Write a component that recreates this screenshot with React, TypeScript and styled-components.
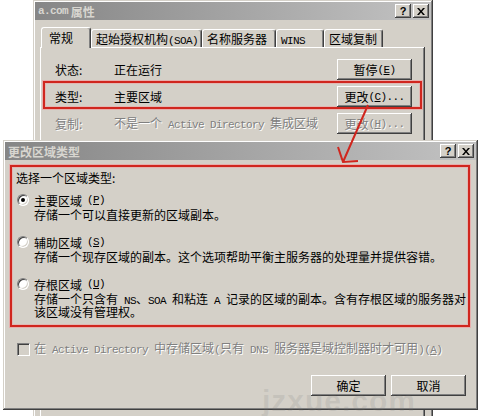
import styled, { createGlobalStyle } from 'styled-components';

const GlobalStyle = createGlobalStyle`
  html, body {
    margin: 0;
    padding: 0;
    background: #ffffff;
  }
  body {
    width: 481px;
    height: 416px;
    overflow: hidden;
    font-family: "Noto Sans CJK SC", "Noto Sans CJK TC", sans-serif;
    font-size: 12px;
    color: #000000;
  }
`;

// 윈도우 2000 스타일 색
const FACE = '#d4d0c8';
const RED = '#d0261e';

const raised = `
  background: ${FACE};
  box-shadow: inset -1px -1px #404040, inset 1px 1px #ffffff, inset -2px -2px #808080,
    inset 2px 2px ${FACE};
`;

const Desktop = styled.div`
  position: relative;
  width: 481px;
  height: 416px;
  overflow: hidden;
  background: #ffffff;
`;

const Window = styled.div`
  position: absolute;
  box-sizing: border-box;
  padding: 2px;
  display: flex;
  flex-direction: column;
  background: ${FACE};
  box-shadow: inset -1px -1px #404040, inset 1px 1px ${FACE}, inset -2px -2px #808080,
    inset 2px 2px #ffffff;
`;

const PropertiesWindow = styled(Window)`
  left: 33px;
  top: 0;
  width: 400px;
  height: 440px;
`;

const ZoneDialog = styled(Window)`
  left: 3px;
  top: 140px;
  width: 475px;
  height: 270px;
  z-index: 2;
`;

const TitleBar = styled.div`
  height: 18px;
  display: flex;
  align-items: center;
  padding: 0 2px 0 3px;
  background: linear-gradient(90deg, #868686, #c2c2c2);
  color: #d8d6d0;
  font-weight: bold;
  white-space: nowrap;
`;

const TitleButtons = styled.div`
  margin-left: auto;
  display: flex;
  gap: 2px;
`;

const TitleButton = styled.div`
  ${raised};
  width: 16px;
  height: 14px;
  display: flex;
  align-items: center;
  justify-content: center;
  font-family: "Liberation Sans", sans-serif;
  font-size: 11px;
  font-weight: bold;
  color: #000000;
`;

const Lt = styled.span`
  font-family: "Liberation Mono", monospace;
  font-size: 11px;
  letter-spacing: -0.6px;
`;

const TabStrip = styled.div`
  height: 20px;
  margin-top: 7px;
  padding-left: 6px;
  display: flex;
  align-items: flex-end;
`;

const Tab = styled.div<{ $width: number; $active?: boolean }>`
  position: relative;
  z-index: ${(p) => (p.$active ? 1 : 0)};
  box-sizing: border-box;
  width: ${(p) => p.$width}px;
  height: ${(p) => (p.$active ? 21 : 18)}px;
  margin-bottom: ${(p) => (p.$active ? -1 : 0)}px;
  padding-left: ${(p) => (p.$active ? 7 : 4)}px;
  line-height: ${(p) => (p.$active ? 19 : 17)}px;
  background: ${FACE};
  border-top: 1px solid #ffffff;
  border-left: 1px solid #ffffff;
  border-right: 1px solid #404040;
  box-shadow: inset -1px 0 #808080;
  border-radius: 3px 3px 0 0;
  white-space: nowrap;
`;

const TabPanel = styled.div`
  flex: 1;
  margin: 0 6px 0 5px;
  padding: 12px 13px 0 15px;
  ${raised};
  box-shadow: inset -1px -1px #404040, inset 1px 1px #ffffff, inset -2px -2px #808080;
`;

const InfoRow = styled.div<{ $disabled?: boolean }>`
  display: grid;
  grid-template-columns: 59px 1fr 75px;
  align-items: center;
  height: 21px;
  line-height: 16px;
  color: ${(p) => (p.$disabled ? '#808080' : '#000000')};
  text-shadow: ${(p) => (p.$disabled ? '1px 1px #ffffff' : 'none')};
  white-space: nowrap;
  & + & {
    margin-top: 4px;
  }
`;

const Highlight = styled.div`
  margin: 1px -10px 4px -12px;
  padding: 3px 8px 0 10px;
  border: 2px solid ${RED};
  box-shadow: 0 0 0 1px rgba(240, 160, 160, 0.7), inset 0 0 0 1px rgba(240, 160, 160, 0.5);
`;

const PushButton = styled.div<{ $disabled?: boolean }>`
  ${raised};
  box-sizing: border-box;
  width: 75px;
  height: 21px;
  line-height: 16px;
  display: flex;
  align-items: center;
  justify-content: center;
  white-space: nowrap;
  color: ${(p) => (p.$disabled ? '#808080' : '#000000')};
  text-shadow: ${(p) => (p.$disabled ? '1px 1px #ffffff' : 'none')};
`;

const DialogBody = styled.div`
  padding: 5px 6px 0 5px;
  display: flex;
  flex-direction: column;
`;

const ZoneBox = styled.div`
  padding: 3px 2px 7px 4px;
  border: 2px solid ${RED};
  box-shadow: 0 0 0 1px rgba(240, 160, 160, 0.7), inset 0 0 0 1px rgba(240, 160, 160, 0.5);
`;

const Heading = styled.div`
  line-height: 15px;
`;

const OptionList = styled.div`
  margin-top: 7px;
  display: flex;
  flex-direction: column;
  gap: 13px;
`;

const OptionLabel = styled.label`
  display: flex;
  align-items: center;
  gap: 5px;
  height: 16px;
  line-height: 15px;
  white-space: nowrap;
`;

const Radio = styled.span<{ $checked?: boolean }>`
  position: relative;
  box-sizing: border-box;
  width: 12px;
  height: 12px;
  margin-left: 1px;
  border-radius: 50%;
  background: #ffffff;
  border: 1px solid;
  border-color: #808080 #ffffff #ffffff #808080;
  box-shadow: inset 1px 1px #404040, inset -1px -1px ${FACE};
  &::after {
    content: '';
    display: ${(p) => (p.$checked ? 'block' : 'none')};
    position: absolute;
    left: 3px;
    top: 3px;
    width: 4px;
    height: 4px;
    border-radius: 50%;
    background: #000000;
  }
`;

const OptionDesc = styled.div`
  padding-left: 18px;
  height: 13px;
  line-height: 13px;
  white-space: nowrap;
`;

const CheckRow = styled.div`
  margin-top: 14px;
  padding-left: 7px;
  height: 16px;
  line-height: 15px;
  display: flex;
  align-items: center;
  gap: 4px;
  color: #808080;
  text-shadow: 1px 1px #ffffff;
  white-space: nowrap;
`;

const CheckBox = styled.span`
  box-sizing: border-box;
  width: 13px;
  height: 13px;
  background: ${FACE};
  border: 1px solid;
  border-color: #808080 #ffffff #ffffff #808080;
  box-shadow: inset 1px 1px #404040, inset -1px -1px ${FACE};
`;

const ButtonRow = styled.div`
  margin-top: 18px;
  padding-right: 4px;
  display: flex;
  justify-content: flex-end;
  gap: 5px;
`;

const Annotation = styled.svg`
  position: absolute;
  left: 0;
  top: 0;
  z-index: 3;
  pointer-events: none;
`;

const Watermark = styled.div`
  position: absolute;
  left: 262px;
  top: 384px;
  z-index: 3;
  font-family: "Liberation Sans", sans-serif;
  font-size: 30px;
  font-weight: bold;
  letter-spacing: 1px;
  color: rgba(120, 120, 120, 0.16);
  pointer-events: none;
`;

const CloseGlyph = () => (
  <svg width="8" height="7" viewBox="0 0 8 7">
    <path d="M0 0h2l2 2.5L6 0h2L5 3.5 8 7H6L4 4.5 2 7H0l3-3.5z" fill="#000" />
  </svg>
);

const Controls = () => (
  <TitleButtons>
    <TitleButton>?</TitleButton>
    <TitleButton>
      <CloseGlyph />
    </TitleButton>
  </TitleButtons>
);

const tabs = [
  { label: <>常规</>, width: 50, active: true },
  { label: <>起始授权机构<Lt>(SOA)</Lt></>, width: 111 },
  { label: <>名称服务器</>, width: 74 },
  { label: <Lt>WINS</Lt>, width: 48 },
  { label: <>区域复制</>, width: 59 },
];

const options = [
  {
    label: <>主要区域<Lt>(<u>P</u>)</Lt></>,
    checked: true,
    desc: [<>存储一个可以直接更新的区域副本。</>],
  },
  {
    label: <>辅助区域<Lt>(<u>S</u>)</Lt></>,
    desc: [<>存储一个现存区域的副本。这个选项帮助平衡主服务器的处理量并提供容错。</>],
  },
  {
    label: <>存根区域<Lt>(<u>U</u>)</Lt></>,
    desc: [
      <>
        存储一个只含有<Lt> NS</Lt>、<Lt>SOA </Lt>和粘连<Lt> A </Lt>记录的区域的副本。含有存根区域的服务器对
      </>,
      <>该区域没有管理权。</>,
    ],
  },
];

export default function App() {
  return (
    <>
      <GlobalStyle />
      <Desktop>
        <PropertiesWindow>
          <TitleBar>
            <Lt>a.com</Lt>&nbsp;属性
            <Controls />
          </TitleBar>
          <TabStrip>
            {tabs.map((t, i) => (
              <Tab key={i} $width={t.width} $active={t.active}>
                {t.label}
              </Tab>
            ))}
          </TabStrip>
          <TabPanel>
            <InfoRow>
              <span>状态:</span>
              <span>正在运行</span>
              <PushButton>
                暂停<Lt>(<u>E</u>)</Lt>
              </PushButton>
            </InfoRow>
            <Highlight>
              <InfoRow>
                <span>类型:</span>
                <span>主要区域</span>
                <PushButton>
                  更改<Lt>(<u>C</u>)...</Lt>
                </PushButton>
              </InfoRow>
            </Highlight>
            <InfoRow $disabled>
              <span>复制:</span>
              <span>
                不是一个<Lt> Active Directory </Lt>集成区域
              </span>
              <PushButton $disabled>
                更改<Lt>(<u>H</u>)...</Lt>
              </PushButton>
            </InfoRow>
          </TabPanel>
        </PropertiesWindow>

        <ZoneDialog>
          <TitleBar>
            更改区域类型
            <Controls />
          </TitleBar>
          <DialogBody>
            <ZoneBox>
              <Heading>选择一个区域类型:</Heading>
              <OptionList>
                {options.map((o, i) => (
                  <div key={i}>
                    <OptionLabel>
                      <Radio $checked={o.checked} />
                      {o.label}
                    </OptionLabel>
                    {o.desc.map((line, j) => (
                      <OptionDesc key={j}>{line}</OptionDesc>
                    ))}
                  </div>
                ))}
              </OptionList>
            </ZoneBox>
            <CheckRow>
              <CheckBox />
              <span>
                在<Lt> Active Directory </Lt>中存储区域<Lt>(</Lt>只有<Lt> DNS </Lt>
                服务器是域控制器时才可用<Lt>)(<u>A</u>)</Lt>
              </span>
            </CheckRow>
            <ButtonRow>
              <PushButton>确定</PushButton>
              <PushButton>取消</PushButton>
            </ButtonRow>
          </DialogBody>
        </ZoneDialog>

        <Annotation width="481" height="416" viewBox="0 0 481 416">
          <path
            d="M368 105 L343 162 M338 147 L343 162 L358 161"
            fill="none"
            stroke={RED}
            strokeWidth="2"
          />
        </Annotation>
        <Watermark>jzxue.com</Watermark>
      </Desktop>
    </>
  );
}
